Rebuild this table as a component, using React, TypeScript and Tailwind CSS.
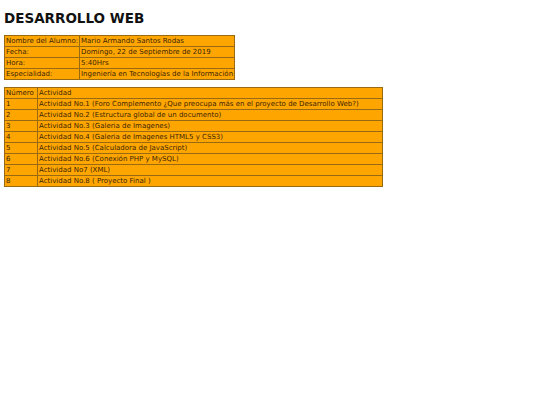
import React from "react";

const info: [string, string][] = [
  ["Nombre del Alumno:", "Mario Armando Santos Rodas"],
  ["Fecha:", "Domingo, 22 de Septiembre de 2019"],
  ["Hora:", "5:40Hrs"],
  ["Especialidad:", "Ingeniería en Tecnologías de la Información"],
];

const acts: [string, string][] = [
  ["1", "Actividad No.1 (Foro Complemento ¿Que preocupa más en el proyecto de Desarrollo Web?)"],
  ["2", "Actividad No.2 (Estructura global de un documento)"],
  ["3", "Actividad No.3 (Galeria de Imagenes)"],
  ["4", "Actividad No.4 (Galeria de Imagenes HTML5 y CSS3)"],
  ["5", "Actividad No.5 (Calculadora de JavaScript)"],
  ["6", "Actividad No.6 (Conexión PHP y MySQL)"],
  ["7", "Actividad No7 (XML)"],
  ["8", "Actividad No.8 ( Proyecto Final )"],
];

const td = "border border-[#9a6a12] px-[1px] h-[11px] leading-[9px] text-left align-middle whitespace-nowrap";

export default function App() {
  return (
    <div className="bg-white w-[540px] h-[405px] pl-[4px] pt-[10px] text-[#3a2600] font-['DejaVu_Sans',Verdana,sans-serif]">
      <h1 className="text-[13.5px] leading-[16px] font-bold text-[#111] font-['DejaVu_Sans',Verdana,sans-serif] mb-[9px]">
        DESARROLLO WEB
      </h1>
      <table className="border-collapse bg-[#ffa500] text-[7px] border border-[#9a6a12]">
        <tbody>
          {info.map(([a, b]) => (
            <tr key={a}>
              <td className={td}>{a}</td>
              <td className={td}>{b}</td>
            </tr>
          ))}
        </tbody>
      </table>
      <table className="mt-[7px] border-collapse bg-[#ffa500] text-[7px] border border-[#9a6a12] w-[379px]">
        <tbody>
          <tr>
            <td className={td + " w-[33px]"}>Número</td>
            <td className={td}>Actividad</td>
          </tr>
          {acts.map(([n, a]) => (
            <tr key={n}>
              <td className={td}>{n}</td>
              <td className={td}>{a}</td>
            </tr>
          ))}
        </tbody>
      </table>
    </div>
  );
}
